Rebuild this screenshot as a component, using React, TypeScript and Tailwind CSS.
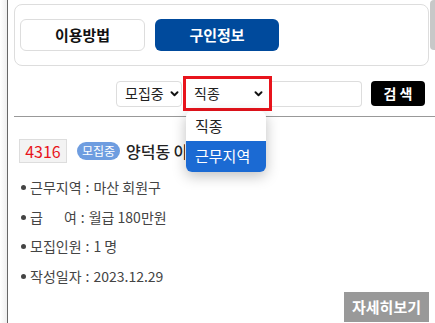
import React from 'react';

const font = { fontFamily: '"Noto Sans CJK KR", "Noto Sans", sans-serif' };

function Chevron({ className }: { className?: string }) {
  return (
    <svg viewBox="0 0 10 7" className={className} fill="none" stroke="#111" strokeWidth="2.2" strokeLinecap="round" strokeLinejoin="round">
      <path d="M1.5 1.5 L5 5 L8.5 1.5" />
    </svg>
  );
}

const rows: [React.ReactNode, string][] = [
  ['근무지역', '마산 회원구'],
  [
    <span key="g">
      급<span className="inline-block w-[21px]" />여
    </span>,
    '월급 180만원',
  ],
  ['모집인원', '1 명'],
  ['작성일자', '2023.12.29'],
];

export default function App() {
  return (
    <div className="relative flex h-[323px] w-[435px] overflow-hidden bg-white text-[#222]" style={font}>
      <div className="w-[7px] bg-gradient-to-r from-white to-[#eee]" />
      <div className="flex-1 border-l border-[#666]">
        {/* tab card */}
        <div className="ml-[6px] mr-[6px] mt-[4px] flex h-[62px] items-center gap-[10px] rounded-lg border border-[#ddd] px-[5px]">
          <button className="h-[32px] w-[125px] rounded-md border border-[#ddd] bg-white text-[15px] font-bold text-[#111]">
            이용방법
          </button>
          <button className="h-[32px] w-[124px] rounded-md bg-[#004a9c] text-[15px] font-bold text-white">
            구인정보
          </button>
        </div>

        {/* search row */}
        <div className="mt-[10px] flex h-[35px] items-center pl-[108px]">
          <div className="flex h-[26px] w-[66px] items-center justify-between rounded border border-[#ddd] pl-[8px] pr-[2px] text-[14px]">
            모집중
            <Chevron className="h-[6px] w-[9px]" />
          </div>
          <div className="ml-[1px] flex h-[35px] w-[89px] items-center justify-between border-[3px] border-[#e8141c] pl-[8px] pr-[6px] text-[14px]">
            직종
            <Chevron className="h-[6px] w-[9px]" />
          </div>
          <div className="h-[26px] w-[90px] rounded-r border border-l-0 border-[#ddd]" />
          <button className="ml-[9px] h-[25px] w-[54px] rounded bg-black text-[14px] font-bold text-white">
            검 색
          </button>
        </div>

        <div className="ml-[6px] mt-[5px] border-t border-[#999]" />

        {/* listing */}
        <div className="pl-[11px] pt-[22px]">
          <div className="flex items-center">
            <span className="flex h-[24px] w-[48px] items-center justify-center border border-[#ddd] bg-[#f3f3f3] text-[16px] text-[#e8141c]">
              4316
            </span>
            <span className="ml-[10px] flex h-[18px] w-[43px] items-center justify-center rounded-full bg-[#6e9de0] text-[12px] text-white">
              모집중
            </span>
            <span className="ml-[6px] w-[59px] overflow-hidden whitespace-nowrap text-[16px] font-medium text-[#222]">
              양덕동 아파트 관리원
            </span>
          </div>
          <ul className="mt-[10px] flex flex-col text-[14px] text-[#444]">
            {rows.map(([label, value], i) => (
              <li key={i} className="flex h-[29.5px] items-center">
                <span className="ml-[2px] mr-[4px] inline-block h-[5px] w-[5px] rounded-full bg-[#444]" />
                {label}
                <span className="mx-[4px]">:</span>
                {value}
              </li>
            ))}
          </ul>
        </div>
        <div className="flex justify-end pr-[6px]">
          <button className="mt-[1px] h-[30px] w-[85px] bg-[#999] text-[15px] font-bold text-white">자세히보기</button>
        </div>
      </div>

      {/* scrollbar thumb */}
      <div className="absolute right-0 top-0 h-[50px] w-[5px] rounded-l bg-[#c8c8c8]" />

      {/* open dropdown */}
      <div className="absolute left-[186px] top-[111px] w-[80px] overflow-hidden rounded-md bg-white text-[15px] shadow-[0_4px_14px_rgba(0,0,0,0.25)]">
        <div className="flex h-[30px] items-center pl-[9px] text-[#222]">직종</div>
        <div className="flex h-[31px] items-center bg-[#1b6ad3] pl-[9px] text-white">근무지역</div>
      </div>
    </div>
  );
}
